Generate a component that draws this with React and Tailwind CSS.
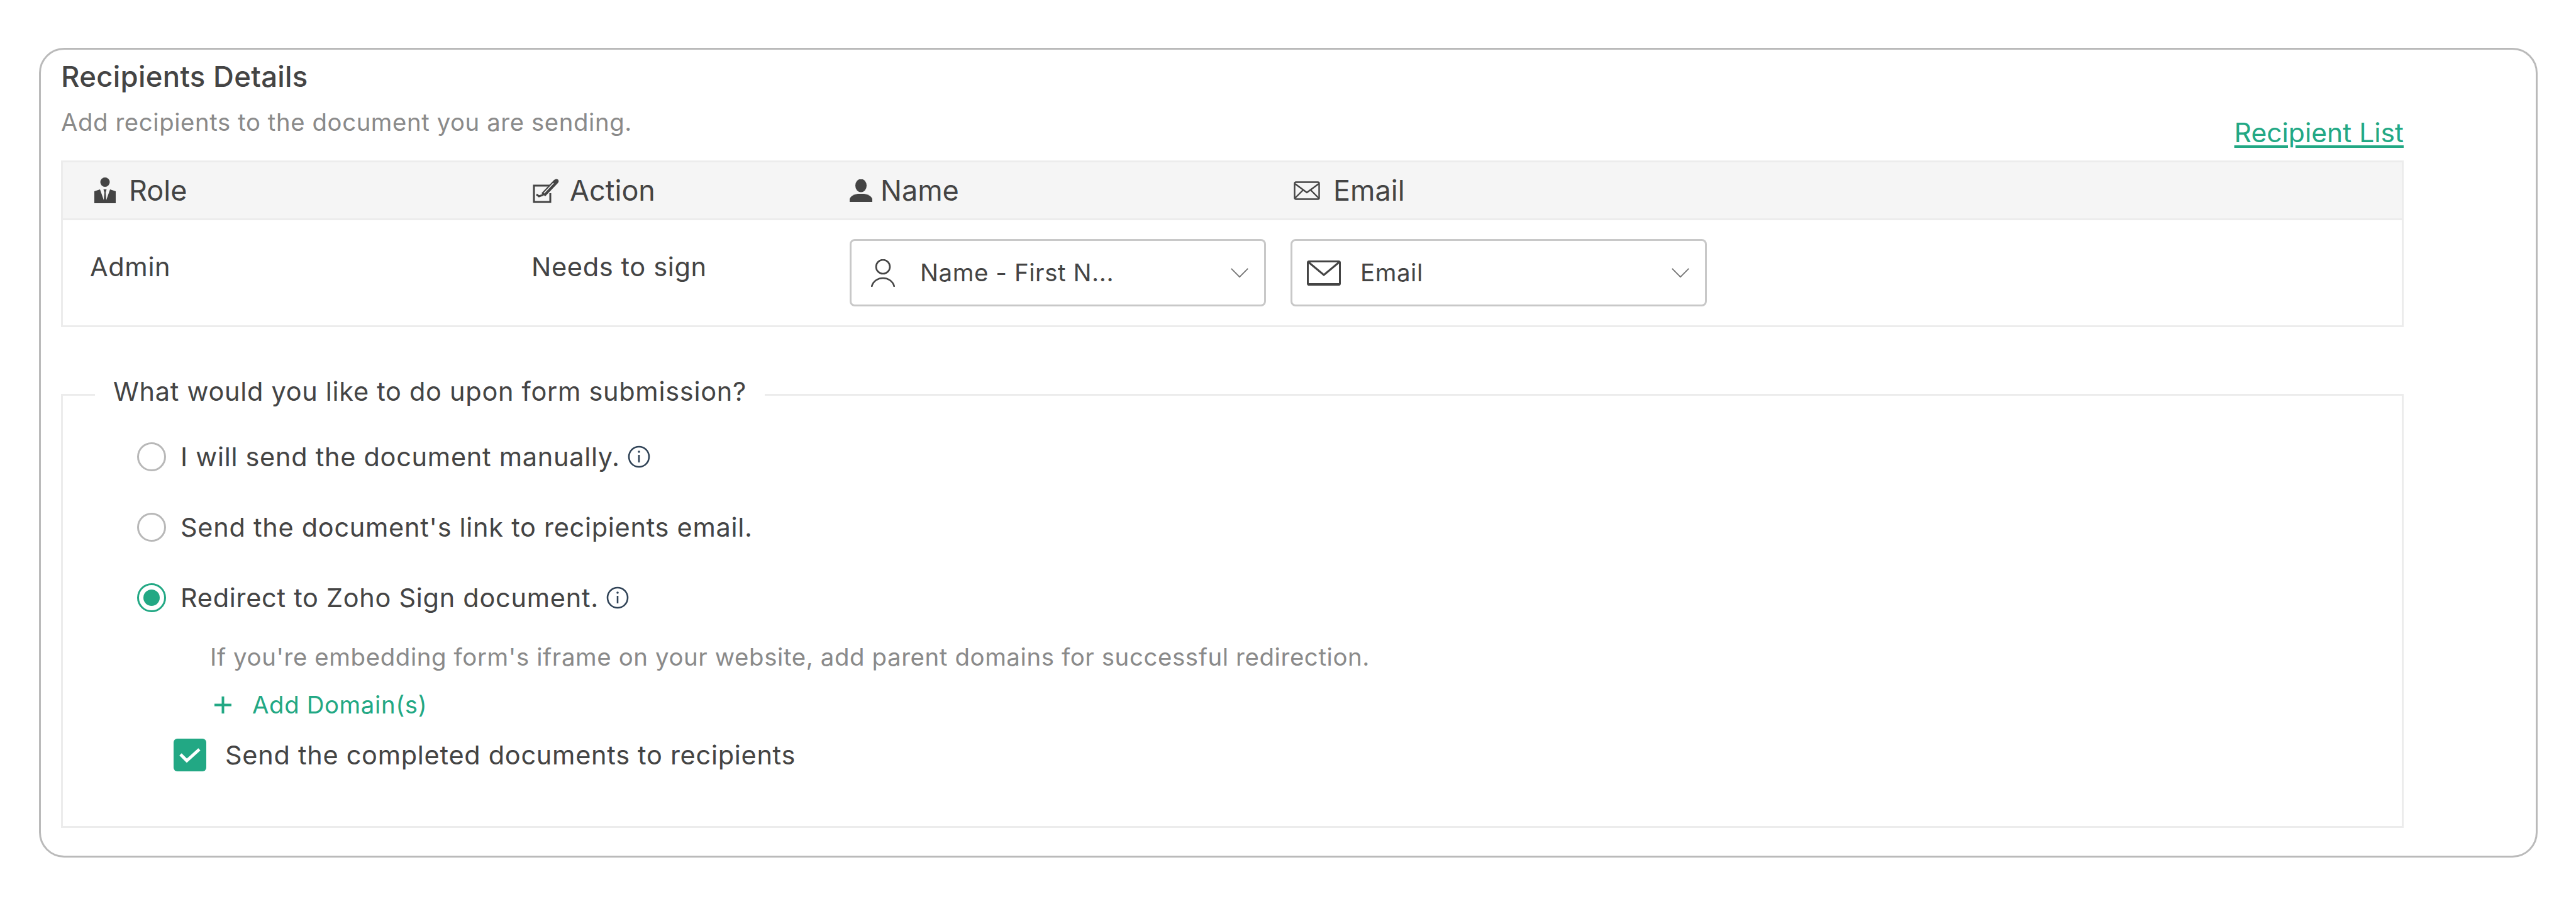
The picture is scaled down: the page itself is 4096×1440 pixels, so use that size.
function RoleIcon() {
  return (
    <svg viewBox="0 0 34 42" className="w-[34px] h-[42px] shrink-0" fill="#444444">
      <circle cx="17" cy="7.5" r="7.5" />
      <path d="M0 22 L9 19 L15 36 L16 24 L14.5 19 H19.5 L18 24 L19 36 L25 19 L34 22 V41 H0 Z" />
    </svg>
  )
}

function ActionIcon() {
  return (
    <svg viewBox="0 0 44 40" className="w-[44px] h-[40px] shrink-0" fill="none" stroke="#444444">
      <path d="M28 12 H2 V38 H28 V24" strokeWidth="3" />
      <path d="M6 26 L10 29 L16 27 L36 5" strokeWidth="3" />
      <path d="M14 24 L34 3 Q38 0 41 3 Q42 6 40 8 L20 29 Z" fill="#444444" stroke="none" />
      <path d="M18 24 L33 8" stroke="#f5f5f5" strokeWidth="1.5" />
    </svg>
  )
}

function NameIcon() {
  return (
    <svg viewBox="0 0 36 36" className="w-[36px] h-[36px] shrink-0" fill="#444444">
      <ellipse cx="18" cy="10" rx="9" ry="10.5" />
      <path d="M0 36 V31 Q2 25 13 23 H23 Q34 25 36 31 V36 Z" />
    </svg>
  )
}

function HeadMailIcon() {
  return (
    <svg viewBox="0 0 42 30" className="w-[42px] h-[30px] shrink-0" fill="none" stroke="#444444" strokeWidth="2.4">
      <rect x="1.5" y="1.5" width="39" height="27" rx="2" />
      <path d="M2 4 L21 18 L40 4" />
      <path d="M2 27 L15 14 M40 27 L27 14" />
    </svg>
  )
}

function SelectMailIcon() {
  return (
    <svg viewBox="0 0 54 40" className="w-[54px] h-[40px] shrink-0" fill="none" stroke="#444444" strokeWidth="3">
      <rect x="1.5" y="1.5" width="51" height="37" rx="2" />
      <path d="M3 3 L27 23 L51 3" />
      <path d="M2 38 H52" strokeWidth="4" />
    </svg>
  )
}

function PersonIcon() {
  return (
    <svg viewBox="0 0 38 44" className="w-[38px] h-[44px] shrink-0" fill="none" stroke="#444444" strokeWidth="2.6">
      <circle cx="19" cy="12" r="11" />
      <path d="M1 44 C3 34 12 30 19 30 C26 30 35 34 37 44" />
    </svg>
  )
}

function Chevron() {
  return (
    <svg viewBox="0 0 30 18" className="w-[30px] h-[17px] shrink-0" fill="none" stroke="#777777" strokeWidth="2">
      <path d="M1 2 L15 16 L29 2" />
    </svg>
  )
}

function InfoIcon() {
  return (
    <svg viewBox="0 0 36 36" className="w-[36px] h-[36px] shrink-0" fill="none" stroke="#2f4256" strokeWidth="2.6">
      <circle cx="18" cy="18" r="16" />
      <path d="M18 15 V27" />
      <circle cx="18" cy="10" r="1.8" fill="#2f4256" stroke="none" />
    </svg>
  )
}

function Radio({ checked }) {
  return (
    <span className={`w-[46px] h-[46px] rounded-full border-[3px] flex items-center justify-center shrink-0 ${checked ? 'border-[#22a884]' : 'border-[#b8b8b8]'}`}>
      {checked && <span className="w-[26px] h-[26px] rounded-full bg-[#22a884]" />}
    </span>
  )
}

function Select({ icon, label, inset, gap }) {
  return (
    <div className={`w-[662px] h-[107px] rounded-[8px] border-[3px] border-[#c8c8c8] flex items-center pr-[24px] text-[#444444] ${inset}`}>
      {icon}
      <span className={`flex-1 text-[38.4px] leading-[46px] -mt-[2px] tracking-[0.6px] ${gap}`}>{label}</span>
      <Chevron />
    </div>
  )
}

function ColHead({ icon, label, className, gap }) {
  return (
    <div className={`flex items-center ${gap} ${className}`}>
      {icon}
      <span>{label}</span>
    </div>
  )
}

function RadioRow({ checked, label, info }) {
  return (
    <div className="flex items-center h-[46px]">
      <Radio checked={checked} />
      <span className="ml-[23px] mr-[12px]">{label}</span>
      {info && <InfoIcon />}
    </div>
  )
}

export default function App() {
  return (
    <div className="w-[4096px] h-[1440px] bg-white pl-[62px] pt-[76px] font-['Inter',sans-serif] text-[#444444]">
      <div className="w-[3973px] h-[1287px] rounded-[40px] border-[3px] border-[#bababa] pl-[32px] pt-[17px]">
        <div className="w-[3725px]">
          <div className="flex justify-between items-end h-[159px]">
            <div className="mb-[39px]">
              <h2 className="text-[45.5px] tracking-[0.3px] font-medium leading-[50px] text-[#444444]">Recipients Details</h2>
              <p className="mt-[25px] text-[38.3px] leading-[44px] tracking-[0.6px] text-[#8a8a8a]">Add recipients to the document you are sending.</p>
            </div>
            <a className="text-[42.6px] leading-[50px] underline underline-offset-[5px] text-[#22a884] mb-[19px]">Recipient List</a>
          </div>

          <div className="border-[3px] border-[#ececec] h-[265px]">
            <div className="h-[92px] bg-[#f5f5f5] border-b-[3px] border-[#ececec] flex items-center text-[45px]">
              <ColHead className="ml-[50px] w-[697px]" gap="gap-[21px]" icon={<RoleIcon />} label="Role" />
              <ColHead className="w-[504px]" gap="gap-[15px]" icon={<ActionIcon />} label="Action" />
              <ColHead className="w-[706px]" gap="gap-[13px]" icon={<NameIcon />} label="Name" />
              <ColHead gap="gap-[21px]" icon={<HeadMailIcon />} label="Email" />
            </div>
            <div className="flex items-center h-[167px] text-[41.6px] tracking-[0.6px]">
              <span className="ml-[43px] w-[702px] -mt-[19px]">Admin</span>
              <span className="w-[506px] -mt-[19px]">Needs to sign</span>
              <Select icon={<PersonIcon />} label="Name - First N..." inset="pl-[31px]" gap="ml-[40px]" />
              <div className="w-[39px]" />
              <Select icon={<SelectMailIcon />} label="Email" inset="pl-[23px]" gap="ml-[31px]" />
            </div>
          </div>

          <fieldset className="mt-[77px] h-[719px] border-[3px] border-[#ececec] text-[41.5px] tracking-[0.7px] leading-[50px]">
            <legend className="ml-[51px] px-[29px] pb-[10px] leading-[50px]">What would you like to do upon form submission?</legend>
            <div className="pl-[118px]">
              <div className="flex flex-col gap-[66px] mt-[46px]">
                <RadioRow label="I will send the document manually." info />
                <RadioRow label="Send the document's link to recipients email." />
                <RadioRow checked label="Redirect to Zoho Sign document." info />
              </div>
              <p className="ml-[116px] mt-[49px] text-[38.4px] leading-[44px] tracking-[0.6px] text-[#8a8a8a]">If you're embedding form's iframe on your website, add parent domains for successful redirection.</p>
              <div className="ml-[123px] mt-[32px] flex items-center gap-[33px] text-[38.4px] leading-[44px] tracking-[0.6px] text-[#22a884]">
                <svg viewBox="0 0 27 27" className="w-[27px] h-[27px] shrink-0" stroke="#22a884" strokeWidth="4">
                  <path d="M13.5 0 V27 M0 13.5 H27" />
                </svg>
                <span>Add Domain(s)</span>
              </div>
              <div className="ml-[58px] mt-[32px] flex items-center gap-[30px]">
                <span className="w-[52px] h-[52px] rounded-[6px] bg-[#22a884] flex items-center justify-center shrink-0">
                  <svg viewBox="0 0 34 24" className="w-[34px] h-[24px]" fill="none" stroke="white" strokeWidth="5">
                    <path d="M2 11 L12 21 L32 3" />
                  </svg>
                </span>
                <span>Send the completed documents to recipients</span>
              </div>
            </div>
          </fieldset>
        </div>
      </div>
    </div>
  )
}
